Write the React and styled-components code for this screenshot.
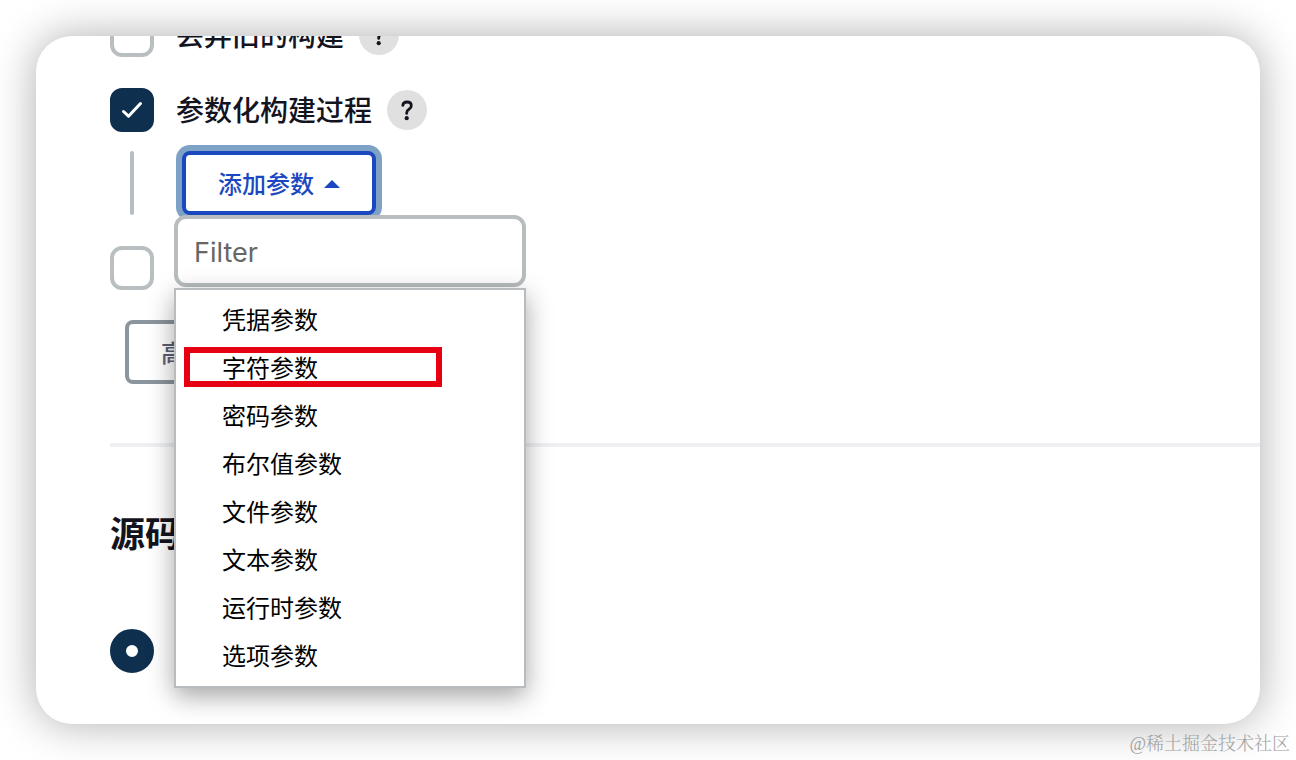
import React, { useState } from "react";
import styled, { createGlobalStyle } from "styled-components";

const GlobalStyle = createGlobalStyle`
  *, *::before, *::after { box-sizing: border-box; }
  body {
    margin: 0;
    background: #fff;
    color: #14141f;
    font-family: "Noto Sans CJK SC", sans-serif;
  }
  button, input { font-family: inherit; margin: 0; }
`;

const Page = styled.div`
  display: flex;
  flex-direction: column;
`;

const Card = styled.main`
  margin: 36px 36px 0;
  padding: 0 0 51px 74px;
  border-radius: 36px;
  background: #fff;
  box-shadow: 0 0 44px rgba(0, 0, 0, 0.32);
  overflow: hidden;
`;

const Form = styled.form`
  display: flex;
  flex-direction: column;
  margin-top: -23px;
`;

const OptionRow = styled.div`
  display: flex;
  align-items: center;
  height: 44px;
  margin-bottom: ${(p) => p.$gap}px;
`;

const OptionLabel = styled.label`
  display: flex;
  align-items: center;
  gap: 22px;
  font-size: 28px;
  font-weight: 500;
  line-height: 44px;
`;

const LabelText = styled.span`
  padding-bottom: 2px;
`;

const CheckFrame = styled.span`
  display: grid;
  width: 44px;
  height: 44px;

  > * { grid-area: 1 / 1; }
  svg { pointer-events: none; }
`;

const CheckInput = styled.input`
  appearance: none;
  width: 44px;
  height: 44px;
  border: 4px solid #b9bfc1;
  border-radius: 12px;
  background: #fff;

  &:checked {
    border-color: #0e304e;
    background: #0e304e;
  }
`;

const RadioInput = styled.input`
  appearance: none;
  width: 44px;
  height: 44px;
  border: 16px solid #0e304e;
  border-radius: 50%;
  background: #fff;
`;

const HelpButton = styled.button`
  width: 40px;
  height: 40px;
  margin-left: 15px;
  padding: 0;
  border: 0;
  border-radius: 50%;
  background: #e0e0e1;

  svg { display: block; }
`;

const Nested = styled.div`
  display: flex;
  height: 64px;
  margin-bottom: 31px;
  padding-left: 20px;
`;

const NestLine = styled.div`
  width: 4px;
  margin-right: 48px;
  border-radius: 2px;
  background: #b5bfc2;
`;

const DropdownAnchor = styled.div`
  position: relative;
`;

const OutlineButton = styled.button`
  display: flex;
  align-items: center;
  align-self: flex-start;
  gap: 10px;
  height: 64px;
  padding: 0 32px;
  border: 4px solid ${(p) => (p.$primary ? "#1b48c1" : "#8a959d")};
  border-radius: 8px;
  background: #fff;
  color: ${(p) => (p.$primary ? "#1b48c1" : "#5b5f75")};
  font-size: 24px;
  font-weight: 500;
  line-height: 36px;
  box-shadow: ${(p) => (p.$primary ? "0 0 0 6px #7da2c6" : "none")};

  svg { margin-top: 2px; }
`;

const AdvancedRow = styled.div`
  display: flex;
  padding-left: 15px;
  margin: 30px 0 59px;
`;

const Menu = styled.div`
  position: absolute;
  z-index: 2;
  top: 64px;
  left: -8px;
  width: 352px;
`;

const FilterInput = styled.input`
  display: block;
  width: 100%;
  height: 72px;
  margin-bottom: 1px;
  padding: 2px 16px 0;
  border: 4px solid #b8bdbf;
  border-radius: 12px;
  background: #fff;
  font-family: Inter, "Noto Sans CJK SC", sans-serif;
  font-size: 27px;
  outline: none;

  &::placeholder { color: #666; opacity: 1; }
`;

const MenuList = styled.ul`
  margin: 0;
  padding: 6px 0;
  border: 2px solid #b8bcbe;
  background: #fff;
  box-shadow: 0 8px 24px rgba(0, 0, 0, 0.36);
  list-style: none;
`;

const MenuItem = styled.li`
  position: relative;
  display: flex;

  &::after {
    content: "";
    display: ${(p) => (p.$marked ? "block" : "none")};
    position: absolute;
    top: 3px;
    left: 8px;
    width: 258px;
    height: 40px;
    border: 6px solid #e60012;
    pointer-events: none;
  }
`;

const MenuAction = styled.button`
  flex: 1;
  height: 48px;
  padding: 0 46px 2px;
  border: 0;
  background: none;
  color: #000;
  font-size: 24px;
  line-height: 46px;
  text-align: left;
`;

const Divider = styled.hr`
  width: 100%;
  height: 4px;
  margin: 0;
  border: 0;
  background: #eff0f4;
`;

const SectionTitle = styled.h2`
  margin: 61px 0 73px;
  font-size: 35px;
  font-weight: 600;
  line-height: 48px;
`;

const Credit = styled.footer`
  padding: 8px 6px 4px;
  color: #a2a2a2;
  font-family: "Liberation Serif", "Noto Serif CJK SC", "Noto Sans CJK SC", serif;
  font-size: 18px;
  font-weight: 300;
  line-height: 24px;
  text-align: right;
`;

const parameters = [
  "凭据参数",
  "字符参数",
  "密码参数",
  "布尔值参数",
  "文件参数",
  "文本参数",
  "运行时参数",
  "选项参数",
];

function CheckOption({ label, name, defaultChecked = false, gap }) {
  const [checked, setChecked] = useState(defaultChecked);
  return (
    <OptionRow $gap={gap}>
      <OptionLabel>
        <CheckFrame>
          <CheckInput
            type="checkbox"
            aria-label={name}
            checked={checked}
            onChange={(e) => setChecked(e.target.checked)}
          />
          {checked && (
            <svg width="44" height="44" viewBox="0 0 44 44" fill="none" aria-hidden="true">
              <path
                d="M13.5 23.5L18.5 28.2L30.5 15.5"
                stroke="#fff"
                strokeWidth="3"
                strokeLinecap="round"
                strokeLinejoin="round"
              />
            </svg>
          )}
        </CheckFrame>
        {label && <LabelText>{label}</LabelText>}
      </OptionLabel>
      {label && (
        <HelpButton type="button" aria-label="Help">
          <svg width="40" height="40" viewBox="0 0 40 40" fill="none" aria-hidden="true">
            <path
              d="M15.8 15.4C16.1 13.2 17.7 12 20 12C22.6 12 24.3 13.5 24.3 15.7C24.3 17.3 23.4 18.3 22 19.2C20.4 20.2 19.7 21 19.7 22.8V23.4"
              stroke="#14141f"
              strokeWidth="2.8"
              strokeLinecap="round"
              strokeLinejoin="round"
            />
            <circle cx="19.7" cy="28.2" r="2.1" fill="#14141f" />
          </svg>
        </HelpButton>
      )}
    </OptionRow>
  );
}

export default function App() {
  return (
    <Page>
      <GlobalStyle />
      <Card>
        <Form onSubmit={(e) => e.preventDefault()}>
          <CheckOption label="丢弃旧的构建" gap={31} />
          <CheckOption label="参数化构建过程" defaultChecked gap={19} />
          <Nested>
            <NestLine />
            <DropdownAnchor>
              <OutlineButton type="button" $primary aria-expanded="true">
                添加参数
                <svg width="16" height="8" viewBox="0 0 16 8" aria-hidden="true">
                  <path d="M0 8L8 0L16 8Z" fill="currentColor" />
                </svg>
              </OutlineButton>
              <Menu>
                <FilterInput type="text" placeholder="Filter" aria-label="Filter" />
                <MenuList>
                  {parameters.map((name) => (
                    <MenuItem key={name} $marked={name === "字符参数"}>
                      <MenuAction type="button">{name}</MenuAction>
                    </MenuItem>
                  ))}
                </MenuList>
              </Menu>
            </DropdownAnchor>
          </Nested>
          <CheckOption name="并发构建" gap={0} />
          <AdvancedRow>
            <OutlineButton type="button">高级</OutlineButton>
          </AdvancedRow>
          <Divider />
          <SectionTitle>源码管理</SectionTitle>
          <OptionRow $gap={0}>
            <RadioInput type="radio" name="scm" aria-label="无" defaultChecked />
          </OptionRow>
        </Form>
      </Card>
      <Credit>@稀土掘金技术社区</Credit>
    </Page>
  );
}
